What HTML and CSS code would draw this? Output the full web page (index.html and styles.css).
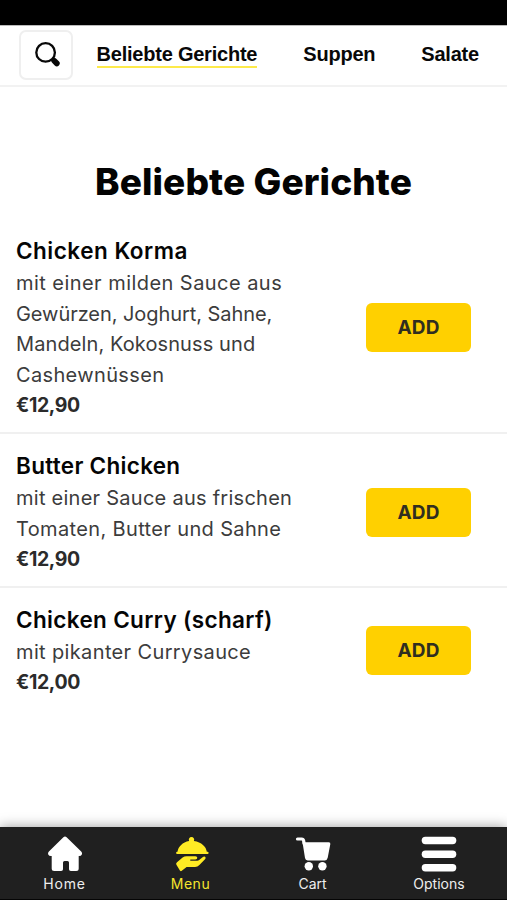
FILE: index.html
```html
<!DOCTYPE html>
<html lang="de">
<head>
<meta charset="utf-8">
<title>Beliebte Gerichte</title>
<link rel="stylesheet" href="styles.css">
</head>
<body>
<div class="app">
  <div class="status"></div>
  <header class="top">
    <button class="search" aria-label="Suche">
      <svg width="28" height="28" viewBox="0 0 28 28"><circle cx="11.6" cy="11.4" r="9.3" fill="none" stroke="#080808" stroke-width="2.3"/><path d="M18 18l2.2 2.2" stroke="#080808" stroke-width="3"/><path d="M20.2 19.8l2.6 2.6" stroke="#080808" stroke-width="5.8" stroke-linecap="round"/></svg>
    </button>
    <nav class="tabs">
      <a class="tab tab-active">Beliebte Gerichte</a>
      <a class="tab">Suppen</a>
      <a class="tab">Salate</a>
    </nav>
  </header>
  <main class="content">
    <h1>Beliebte Gerichte</h1>
    <section class="dish">
      <div class="info">
        <h2><span class="n1">Chicken Korma</span></h2>
        <p><span class="a1">mit einer milden Sauce aus</span><br><span class="a2">Gewürzen, Joghurt, Sahne,</span><br><span class="a3">Mandeln, Kokosnuss und</span><br><span class="a4">Cashewnüssen</span></p>
        <strong>€12,90</strong>
      </div>
      <button class="add">ADD</button>
    </section>
    <section class="dish">
      <div class="info">
        <h2><span class="n2">Butter Chicken</span></h2>
        <p><span class="b1">mit einer Sauce aus frischen</span><br><span class="b2">Tomaten, Butter und Sahne</span></p>
        <strong>€12,90</strong>
      </div>
      <button class="add">ADD</button>
    </section>
    <section class="dish">
      <div class="info">
        <h2><span class="n3">Chicken Curry (scharf)</span></h2>
        <p><span class="c1">mit pikanter Currysauce</span></p>
        <strong>€12,00</strong>
      </div>
      <button class="add">ADD</button>
    </section>
  </main>
  <footer class="bottom">
    <a class="item home">
      <svg width="36" height="36" viewBox="0 0 36 36"><path d="M16.400 1.300q1.600-1.400 3.200 0L34.200 15.400q1.400 1.500.5 3.300-.6 1.200-2.500 1.200h-.5V32.500q0 2.500-2.500 2.500h-5.400q-1.800 0-1.800-1.800V26.500q0-1.500-1.500-1.500h-3q-1.500 0-1.500 1.500v6.700q0 1.800-1.800 1.800H7.200q-2.500 0-2.500-2.500V19.900h-.8q-1.900 0-2.500-1.200-.9-1.800.5-3.300z"/></svg>
      <span>Home</span>
    </a>
    <a class="item menu">
      <svg width="36" height="36" viewBox="0 0 36 36"><path d="M17.500 1a2.700 2.700 0 0 1 2.400 3.900C27.500 6 32.300 10.500 32.800 15.800H33.500a1 1 0 0 1 0 2.200H3.200a1 1 0 0 1 0-2.200H3.500C4.200 10.500 8.600 6 15.100 4.900A2.700 2.700 0 0 1 17.500 1z"/><path d="M3 26.200l5.600-4.600q1.700-1.300 4-1.300h8.800q1.900 0 1.900 1.500 0 1.700-2 1.700h-5v1.300h6.800q1.300 0 2.400-1l3.100-2.600q1.400-1.200 2.500-.4 1.300 1-.1 2.500l-5.600 5.700q-1.900 1.900-4.300 1.900h-8.500l-4.800 3.900q-1 .8-1.900-.2l-3.500-5.800q-.8-1.500.6-2.600z"/></svg>
      <span>Menu</span>
    </a>
    <a class="item cart">
      <svg width="36" height="36" viewBox="0 0 36 36"><path d="M2.500 3h4.200q1.600 0 1.900 1.600l.5 3" fill="none" stroke="#fff" stroke-width="3.200" stroke-linecap="round" stroke-linejoin="round"/><path d="M7.500 6.300H33.800q1.900 0 1.500 1.900l-2.600 13.500q-.6 2.700-2.900 2.700H12.700q-2.300 0-2.700-2.400z"/><circle cx="13.800" cy="30.200" r="4.200"/><circle cx="27.400" cy="30.200" r="4.200"/></svg>
      <span>Cart</span>
    </a>
    <a class="item options">
      <svg width="36" height="36" viewBox="0 0 36 36"><rect x=".7" y=".8" width="34.600" height="7.500" rx="3.700"/><rect x=".7" y="14.500" width="34.600" height="7.500" rx="3.700"/><rect x=".7" y="28" width="34.600" height="7.500" rx="3.700"/></svg>
      <span>Options</span>
    </a>
  </footer>
</div>
</body>
</html>
```
FILE: styles.css
```css
* { box-sizing: border-box; }
body { margin: 0; background: #fff; font-family: Inter, sans-serif; }
.app { width: 507px; height: 900px; display: flex; flex-direction: column; overflow: hidden; }
.status { height: 25px; flex: none; background: #000; }
.top { height: 62px; flex: none; display: flex; align-items: flex-start; padding: 5px 0 0 19px; border-top: 1px solid #bbb; border-bottom: 2px solid #f2f2f2; }
.search { width: 54px; height: 50px; margin-top: -1px; border: 2px solid #efefef; border-radius: 7px; background: #fff; display: flex; align-items: center; justify-content: center; padding: 0 0 0 4px; }
.tabs { display: flex; gap: 46px; margin-left: 23.500px; padding-top: 11px; }
.tab { font: bold 20px/23px "Liberation Sans", sans-serif; color: #080808; white-space: nowrap; letter-spacing: -.22px; height: 26px; }
.tab-active { border-bottom: 2px solid #fdea4a; }
.tab { padding-top: 1px; }
.content { flex: 1; min-height: 0; }
h1 { margin: 0; padding-top: 71px; height: 132px; font-size: 37px; line-height: 48px; font-weight: 800; letter-spacing: .1px; text-align: center; color: #030303; white-space: nowrap; }
.dish { display: flex; align-items: center; justify-content: space-between; padding: 15px 36px 11px 16px; border-bottom: 2px solid #f0f0f0; }
.dish:last-child { border-bottom: 0; }
.info { white-space: nowrap; }
h2 { margin: 0; height: 34px; font-size: 22.500px; line-height: 34px; font-weight: 600; color: #050505; }
p { margin: 0; font-size: 20px; line-height: 30.600px; color: #3c3c3c; }
strong { display: block; font-size: 19.500px; line-height: 30.600px; font-weight: 700; letter-spacing: -.4px; color: #2b2b2b; }
.n1 { letter-spacing: .5px; }
.n2 { letter-spacing: .3px; }
.n3 { letter-spacing: .35px; }
.a1 { letter-spacing: .45px; }
.a2 { letter-spacing: -.06px; }
.a3 { letter-spacing: .1px; }
.a4 { letter-spacing: .35px; }
.b1 { letter-spacing: .26px; }
.b2 { letter-spacing: .36px; }
.c1 { letter-spacing: .36px; }
.add { width: 105px; height: 49px; border: 0; border-radius: 6px; background: #ffd000; color: #302e20; font: 700 19px/49px Inter, sans-serif; letter-spacing: .2px; padding: 0; margin-top: 1px; }
.bottom { height: 73px; flex: none; display: flex; background: #202020; box-shadow: 0 0 12px rgba(0,0,0,.4); padding: 9px 0 0 2px; border-bottom: 1px solid #050505; }
.item { display: flex; flex-direction: column; align-items: center; color: #eee; font-size: 14px; line-height: 20px; }
.item svg { display: block; fill: #fff; margin-bottom: 2px; }
.home { width: 125px; letter-spacing: .8px; }
.menu { width: 127px; color: #f5e52e; letter-spacing: .5px; }
.menu svg { fill: #ffeb24; margin-left: 2px; }
.cart { width: 117px; }
.options { width: 136px; }
```
